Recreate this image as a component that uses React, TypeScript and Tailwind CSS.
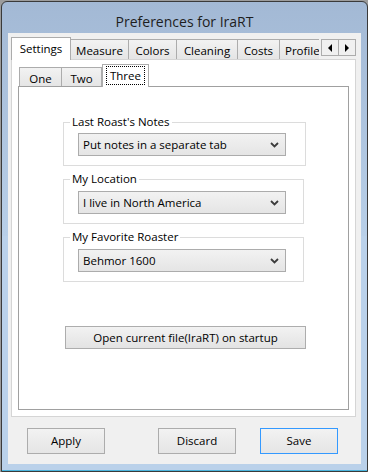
const font = { fontFamily: "'Open Sans', 'Noto Sans', sans-serif" }

function Chevron() {
    return (
        <svg width="9" height="6" viewBox="0 0 9 6" className="shrink-0">
            <path d="M1 1 L4.5 4.5 L8 1" fill="none" stroke="#3c3c3c" strokeWidth="1.8" />
        </svg>
    )
}

function Combo({ value }: { value: string }) {
    return (
        <div className="flex h-[23px] w-[208px] items-center justify-between border border-[#acacac] bg-gradient-to-b from-[#f2f2f2] to-[#e5e5e5] pl-[4px] pr-[6px] text-[11.5px] text-black">
            <span>{value}</span>
            <Chevron />
        </div>
    )
}

function Group({ title, value, width, pt }: { title: string; value: string; width: string; pt: string }) {
    return (
        <fieldset className={`${width} border border-[#dcdcdc] pb-[9px]`}>
            <legend className="ml-[6px] px-[2px] text-[11.5px] leading-[16px] text-black">{title}</legend>
            <div className={`${pt} pl-[14px]`}>
                <Combo value={value} />
            </div>
        </fieldset>
    )
}

const outerTabs = [
    { label: "Measure", w: "w-[58px]" },
    { label: "Colors", w: "w-[48px]" },
    { label: "Cleaning", w: "w-[61px]" },
    { label: "Costs", w: "w-[42px]" },
]

export default function App() {
    return (
        <div className="h-[472px] w-[368px] overflow-hidden bg-[#9c9c9c] pl-[1px] pt-[1px] text-[11.5px]" style={font}>
            <div className="flex h-[471px] w-[367px] flex-col rounded-t-[6px] border border-[#3a3a3a] bg-gradient-to-b from-[#a3b9d5] via-[#b8cfe8] to-[#bad1ea] to-[8%] px-[6px] pb-[7px] shadow-[inset_0_-1px_0_#4ab4dc]">
                <div className="flex h-[31px] shrink-0 items-center justify-center pt-[7px] text-[14px] text-[#1e1e1e]">
                    Preferences for IraRT
                </div>
                <div className="flex flex-1 flex-col bg-[#f0f0f0] pl-[3px] pr-[5px] pt-[4px]">
                    {/* outer tab strip */}
                    <div className="relative flex h-[22px] items-end">
                        <div className="relative z-10 -mb-px flex h-[23px] w-[60px] items-center justify-center border border-b-0 border-[#acacac] bg-white pb-[1px]">
                            Settings
                        </div>
                        {outerTabs.map((t) => (
                            <div key={t.label} className={`flex h-[20px] ${t.w} items-center justify-center border border-b-0 border-l-0 border-[#acacac] bg-gradient-to-b from-[#f2f2f2] to-[#e5e5e5] pt-[2px]`}>
                                {t.label}
                            </div>
                        ))}
                        <div className="flex h-[20px] w-[39px] items-center overflow-hidden whitespace-nowrap border-t border-[#acacac] bg-gradient-to-b from-[#f2f2f2] to-[#e5e5e5] pl-[5px] pt-[2px]">
                            Profile
                        </div>
                        <div className="absolute right-0 top-[2px] flex">
                            <div className="flex h-[17px] w-[18px] items-center justify-center border border-[#acacac] bg-[#f0f0f0]">
                                <div className="h-0 w-0 border-y-[4px] border-r-[4px] border-y-transparent border-r-black" />
                            </div>
                            <div className="flex h-[17px] w-[17px] items-center justify-center border border-l-0 border-[#acacac] bg-[#f0f0f0]">
                                <div className="h-0 w-0 border-y-[4px] border-l-[4px] border-y-transparent border-l-black" />
                            </div>
                        </div>
                    </div>
                    {/* outer page */}
                    <div className="flex h-[358px] flex-col border border-[#d5d5d5] bg-white px-[6px] pb-[6px] pt-[4px]">
                        {/* inner tab strip */}
                        <div className="flex h-[22px] items-end pl-[1px]">
                            <div className="flex h-[19px] w-[43px] items-center justify-center border border-b-0 border-[#acacac] bg-gradient-to-b from-[#f2f2f2] to-[#e5e5e5] pt-[3px]">
                                One
                            </div>
                            <div className="flex h-[19px] w-[40px] items-center justify-center border border-b-0 border-l-0 border-[#acacac] bg-gradient-to-b from-[#f2f2f2] to-[#e5e5e5] pt-[3px]">
                                Two
                            </div>
                            <div className="relative z-10 -mb-px flex h-[23px] w-[47px] items-center justify-center border border-b-0 border-[#acacac] bg-white px-[3px] pb-[2px] pt-[1px]">
                                <span className="flex h-full w-full items-center justify-center border border-dotted border-black">
                                    Three
                                </span>
                            </div>
                        </div>
                        <div className="flex flex-1 flex-col border border-[#a0a0a0] bg-white pl-[44px] pt-[27px]">
                            <Group title="Last Roast's Notes" value="Put notes in a separate tab" width="w-[243px]" pt="pt-[3px]" />
                            <div className="h-[5px]" />
                            <Group title="My Location" value="I live in North America" width="w-[241px]" pt="pt-[4px]" />
                            <div className="h-[5px]" />
                            <Group title="My Favorite Roaster" value="Behmor 1600" width="w-[241px]" pt="pt-[4px]" />
                            <button className="ml-[2px] mt-[44px] flex h-[23px] w-[241px] items-center justify-center border border-[#adadad] bg-gradient-to-b from-[#f2f2f2] to-[#e3e3e3] text-black">
                                Open current file(IraRT) on startup
                            </button>
                        </div>
                    </div>
                    {/* bottom buttons */}
                    <div className="mt-[11px] flex">
                        <button className="ml-[16px] flex h-[26px] w-[78px] items-center justify-center border border-[#acacac] bg-gradient-to-b from-[#f2f2f2] to-[#e5e5e5]">
                            Apply
                        </button>
                        <button className="ml-[53px] flex h-[26px] w-[78px] items-center justify-center border border-[#acacac] bg-gradient-to-b from-[#f2f2f2] to-[#e5e5e5]">
                            Discard
                        </button>
                        <button className="ml-[24px] flex h-[26px] w-[78px] items-center justify-center border border-[#3399ff] bg-gradient-to-b from-[#f2f2f2] to-[#e5e5e5]">
                            Save
                        </button>
                    </div>
                </div>
            </div>
        </div>
    )
}
